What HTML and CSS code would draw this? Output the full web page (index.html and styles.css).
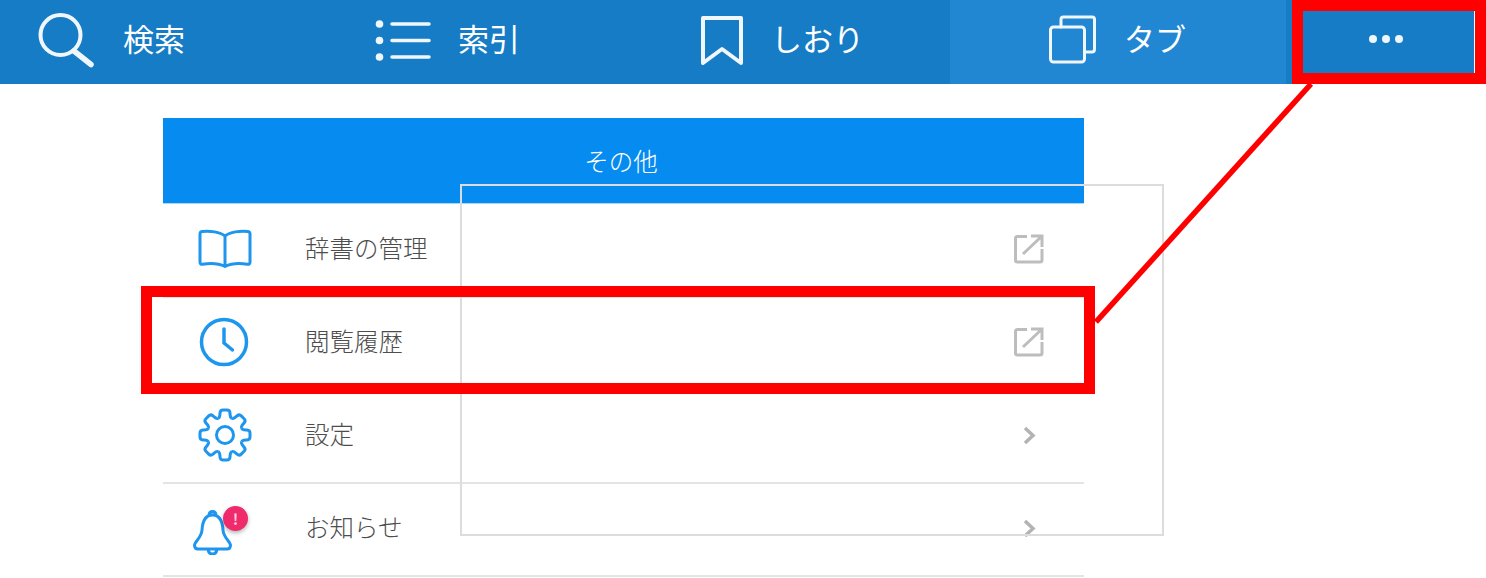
FILE: index.html
```html
<!DOCTYPE html>
<html lang="ja">
<head>
<meta charset="utf-8">
<title>その他</title>
<link rel="stylesheet" href="styles.css">
</head>
<body>
<nav class="topbar">
  <div class="tab tab-search">
    <svg class="tab-icon" width="58" height="58" viewBox="0 0 58 58"><circle cx="22.500" cy="25" r="20"/><path d="M36 41L53 54.500" stroke-width="5.500"/></svg>
    <span class="tab-label label-search">検索</span>
  </div>
  <div class="tab tab-index">
    <svg class="tab-icon icon-index" width="58" height="44" viewBox="0 0 58 44"><circle cx="4.500" cy="5" r="3.800" class="fill"/><circle cx="4.500" cy="21.500" r="3.800" class="fill"/><circle cx="4.500" cy="38" r="3.800" class="fill"/><path d="M17 5H54M17 21.500H54M17 38H54" stroke-width="3.500"/></svg>
    <span class="tab-label label-index">索引</span>
  </div>
  <div class="tab tab-mark">
    <svg class="tab-icon icon-mark" width="44" height="50" viewBox="0 0 44 50"><path d="M3 2H41V47L22 33L3 47Z" stroke-linejoin="round"/></svg>
    <span class="tab-label label-mark">しおり</span>
  </div>
  <div class="tab tab-tabs">
    <svg class="tab-icon icon-tabs" width="50" height="50" viewBox="0 0 50 50"><rect x="2.500" y="12" width="34" height="35" rx="3"/><path d="M13 12V4.500Q13 2 15.500 2H44Q46.500 2 46.500 4.500V34Q46.500 37 44 37H36.500"/></svg>
    <span class="tab-label label-tabs">タブ</span>
  </div>
  <div class="tab tab-more">
    <span class="dots"><i></i><i></i><i></i></span>
  </div>
</nav>

<main class="panel">
  <header class="panel-head">その他</header>
  <ul class="menu">
    <li class="row">
      <span class="row-icon"><svg width="56" height="42" viewBox="0 0 56 42"><path d="M28 8C23 4 13 2.500 5 3.500Q3 3.800 3 6V34Q3 36.500 5.500 36.300C13 35 22 35.500 28 38.500C34 35.500 43 35 50.500 36.300Q53 36.500 53 34V6Q53 3.800 51 3.500C43 2.500 33 4 28 8ZM28 8V38.500"/></svg></span>
      <span class="row-text">辞書の管理</span>
      <svg class="row-end" width="30" height="30" viewBox="0 0 30 30"><path d="M13 2.500H3.500Q1.500 2.500 1.500 4.500V26Q1.500 28 3.500 28H26Q28 28 28 26V15M9 20L28 2M17 2H28V13"/></svg>
    </li>
    <li class="row">
      <span class="row-icon"><svg class="icon-clock" width="50" height="50" viewBox="0 0 50 50"><circle cx="25" cy="25" r="22.500"/><path d="M25 12V26L33.500 33" stroke-linecap="round"/></svg></span>
      <span class="row-text">閲覧履歴</span>
      <svg class="row-end" width="30" height="30" viewBox="0 0 30 30"><path d="M13 2.500H3.500Q1.500 2.500 1.500 4.500V26Q1.500 28 3.500 28H26Q28 28 28 26V15M9 20L28 2M17 2H28V13"/></svg>
    </li>
    <li class="row">
      <span class="row-icon"><svg class="icon-gear" width="56" height="54" viewBox="-28 -27 56 54">
        <defs><path id="tooth" d="M-6.900 -16.600C-5 -17.400 -5.200 -18.500 -5 -22Q-4.800 -25 -2 -25H2Q4.800 -25 5 -22C5.200 -18.500 5 -17.400 6.900 -16.600"/></defs>
        <circle r="8.500"/>
        <use href="#tooth"/><use href="#tooth" transform="rotate(45)"/><use href="#tooth" transform="rotate(90)"/><use href="#tooth" transform="rotate(135)"/><use href="#tooth" transform="rotate(180)"/><use href="#tooth" transform="rotate(225)"/><use href="#tooth" transform="rotate(270)"/><use href="#tooth" transform="rotate(315)"/>
      </svg></span>
      <span class="row-text">設定</span>
      <svg class="row-chev" width="14" height="20" viewBox="0 0 14 20"><path d="M2 2L10 9.500L2 17"/></svg>
    </li>
    <li class="row">
      <span class="row-icon">
        <svg class="bell" width="40" height="45" viewBox="0 0 40 45"><path d="M19.500 5C12 5 9.500 12 9 20C8.500 28 2 31 1.500 35Q1.500 39 5 39H34Q37.500 39 37.500 35C37 31 30.500 28 30 20C29.500 12 27 5 19.500 5ZM16 5.500Q16 1.500 19.500 1.500Q23 1.500 23 5.500M15 39Q15.500 44 19.500 44Q23.500 44 24 39"/></svg>
        <span class="badge">!</span>
      </span>
      <span class="row-text">お知らせ</span>
      <svg class="row-chev" width="14" height="20" viewBox="0 0 14 20"><path d="M2 2L10 9.500L2 17"/></svg>
    </li>
  </ul>
</main>

<div class="guide-box"></div>
<div class="mark mark-more"></div>
<div class="mark mark-row"></div>
<svg class="connector" width="240" height="260" viewBox="0 0 240 260"><path d="M217 0L2 238"/></svg>
</body>
</html>
```
FILE: styles.css
```css
* { box-sizing: border-box; }
html, body { margin: 0; padding: 0; }
body {
  width: 1486px;
  height: 578px;
  overflow: hidden;
  position: relative;
  background: #fff;
  font-family: "Noto Sans CJK JP", "Noto Sans", sans-serif;
  font-weight: 300;
}
.topbar {
  display: flex;
  height: 84px;
  background: #167cc6;
  color: #fff;
}
.tab { display: flex; align-items: center; height: 84px; padding-bottom: 6px; }
.tab-search { width: 335px; padding-left: 38px; }
.tab-index { width: 340px; padding-left: 40px; }
.tab-mark { width: 275px; padding-left: 25px; }
.tab-tabs { width: 336px; padding-left: 98px; background: #2287d3; }
.tab-more { flex: 1; justify-content: center; }
.tab-icon { fill: none; stroke: #f0f7fc; stroke-width: 4; stroke-linecap: round; flex: none; }
.tab-icon .fill { fill: #f0f7fc; stroke: none; }
.icon-index { margin-top: 4px; }
.icon-mark { margin-top: 4px; }
.icon-tabs { margin-top: 2px; stroke-width: 3; }
.tab-label { font-size: 31px; line-height: 40px; font-weight: 400; white-space: nowrap; margin-bottom: 2px; }
.label-search { margin-left: 27px; }
.label-index { margin-left: 25px; }
.label-mark { margin-left: 27px; }
.label-tabs { margin-left: 26px; }
.dots { display: flex; gap: 5px; }
.dots i { display: block; width: 8px; height: 8px; border-radius: 50%; background: #f0f7fc; }
.panel {
  width: 921px;
  margin: 34px 0 0 163px;
}
.panel-head {
  height: 86px;
  background: #068cf0;
  color: #fff;
  font-size: 24.500px;
  line-height: 34px;
  text-align: center;
  padding: 26px 5px 0 0;
  border-bottom: 1px solid #a8d8fa;
}
.menu { list-style: none; margin: 0; padding: 1px 0 0; }
.row {
  display: flex;
  align-items: center;
  height: 93px;
  padding-bottom: 4px;
  border-bottom: 2px solid #e4e4e4;
  color: #4d4d4d;
}
.row-icon {
  position: relative;
  flex: none;
  width: 142px;
  padding-left: 34px;
  display: flex;
  align-items: center;
}
.row-icon svg { fill: none; stroke: #1f96ee; stroke-width: 3; }
.row-icon .icon-clock { margin-left: 2px; stroke-width: 3.500; }
.row-text { flex: 1; font-size: 24.500px; line-height: 34px; padding-bottom: 2px; }
.row-end { flex: none; margin-right: 40px; fill: none; stroke: #bdbdbd; stroke-width: 3; }
.row-chev { flex: none; margin: 2px 47px 0 0; fill: none; stroke: #b3b3b3; stroke-width: 3.500; }
.row-icon .bell { margin: 9px 0 0 -4px; }
.badge {
  position: absolute;
  left: 60px;
  top: 5px;
  width: 25px;
  height: 25px;
  border-radius: 50%;
  background: #ef2b6c;
  color: #fbd0de;
  font-size: 15px;
  font-weight: 700;
  line-height: 25px;
  text-align: center;
  box-shadow: 0 2px 4px rgba(0,0,0,.3);
}
.guide-box {
  position: absolute;
  left: 460px;
  top: 184px;
  width: 704px;
  height: 352px;
  border: 2px solid #dcdcdc;
}
.mark { position: absolute; border: 11px solid #f00; }
.mark-more { left: 1292px; top: 0; width: 194px; height: 84px; box-shadow: inset -1px 0 0 #fff; }
.mark-row { left: 141px; top: 286px; width: 954px; height: 108px; }
.connector {
  position: absolute;
  left: 1094px;
  top: 84px;
  fill: none;
  stroke: #f00;
  stroke-width: 5.500;
}
```
